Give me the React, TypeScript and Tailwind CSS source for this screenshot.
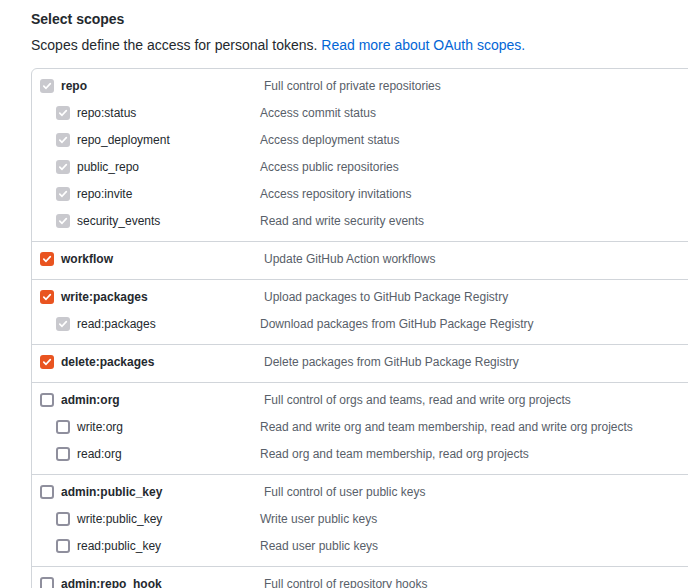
type Scope = {
    name: string;
    desc: string;
    state: "disabled" | "checked" | "empty";
};

type Group = {
    top: Scope;
    subs: Scope[];
};

const groups: Group[] = [
    {
        top: { name: "repo", desc: "Full control of private repositories", state: "disabled" },
        subs: [
            { name: "repo:status", desc: "Access commit status", state: "disabled" },
            { name: "repo_deployment", desc: "Access deployment status", state: "disabled" },
            { name: "public_repo", desc: "Access public repositories", state: "disabled" },
            { name: "repo:invite", desc: "Access repository invitations", state: "disabled" },
            { name: "security_events", desc: "Read and write security events", state: "disabled" },
        ],
    },
    {
        top: { name: "workflow", desc: "Update GitHub Action workflows", state: "checked" },
        subs: [],
    },
    {
        top: { name: "write:packages", desc: "Upload packages to GitHub Package Registry", state: "checked" },
        subs: [{ name: "read:packages", desc: "Download packages from GitHub Package Registry", state: "disabled" }],
    },
    {
        top: { name: "delete:packages", desc: "Delete packages from GitHub Package Registry", state: "checked" },
        subs: [],
    },
    {
        top: { name: "admin:org", desc: "Full control of orgs and teams, read and write org projects", state: "empty" },
        subs: [
            { name: "write:org", desc: "Read and write org and team membership, read and write org projects", state: "empty" },
            { name: "read:org", desc: "Read org and team membership, read org projects", state: "empty" },
        ],
    },
    {
        top: { name: "admin:public_key", desc: "Full control of user public keys", state: "empty" },
        subs: [
            { name: "write:public_key", desc: "Write user public keys", state: "empty" },
            { name: "read:public_key", desc: "Read user public keys", state: "empty" },
        ],
    },
    {
        top: { name: "admin:repo_hook", desc: "Full control of repository hooks", state: "empty" },
        subs: [],
    },
];

function Check({ state }: { state: Scope["state"] }) {
    if (state === "empty") {
        return <span className="w-[14px] h-[14px] shrink-0 rounded-[3px] border-2 border-[#8f8f9d] bg-white" />;
    }
    const bg = state === "checked" ? "bg-[#e95420]" : "bg-[#c9c9ce]";
    return (
        <span className={`w-[14px] h-[14px] shrink-0 rounded-[3px] flex items-center justify-center ${bg}`}>
            <svg width="10" height="10" viewBox="0 0 10 10" fill="none">
                <path d="M1.8 5.2 L4 7.3 L8.3 2.6" stroke="white" strokeWidth="1.7" strokeLinecap="round" strokeLinejoin="round" />
            </svg>
        </span>
    );
}

export default function App() {
    return (
        <div className="w-[688px] h-[588px] overflow-hidden bg-white font-['Liberation_Sans',Arial,sans-serif]">
            <div className="pl-[31px] pt-[9px]">
                <p className="text-[14px] leading-5 font-bold text-[#24292e]">Select scopes</p>
                <p className="text-[14px] leading-5 text-[#24292e] mt-[6px]">
                    Scopes define the access for personal tokens. <a className="text-[#0366d6]">Read more about OAuth scopes.</a>
                </p>

                <div className="mt-[13px] w-[720px] border border-[#d1d5da] rounded-tl-md">
                    {groups.map((g, i) => (
                        <div key={g.top.name} className={`flex flex-col gap-[9px] pt-2 pb-[11px] pl-2 ${i > 0 ? "border-t border-[#d1d5da]" : ""}`}>
                            <div className="flex items-center h-[18px] text-[12px] leading-[18px]">
                                <div className="w-[224px] flex items-center gap-[7px]">
                                    <Check state={g.top.state} />
                                    <span className="font-bold text-[#24292e]">{g.top.name}</span>
                                </div>
                                <span className="text-[#586069]">{g.top.desc}</span>
                            </div>
                            {g.subs.map((s) => (
                                <div key={s.name} className="flex items-center h-[18px] text-[12px] leading-[18px] pl-4">
                                    <div className="w-[204px] flex items-center gap-[7px]">
                                        <Check state={s.state} />
                                        <span className="text-[#24292e]">{s.name}</span>
                                    </div>
                                    <span className="text-[#586069]">{s.desc}</span>
                                </div>
                            ))}
                        </div>
                    ))}
                </div>
            </div>
        </div>
    );
}
